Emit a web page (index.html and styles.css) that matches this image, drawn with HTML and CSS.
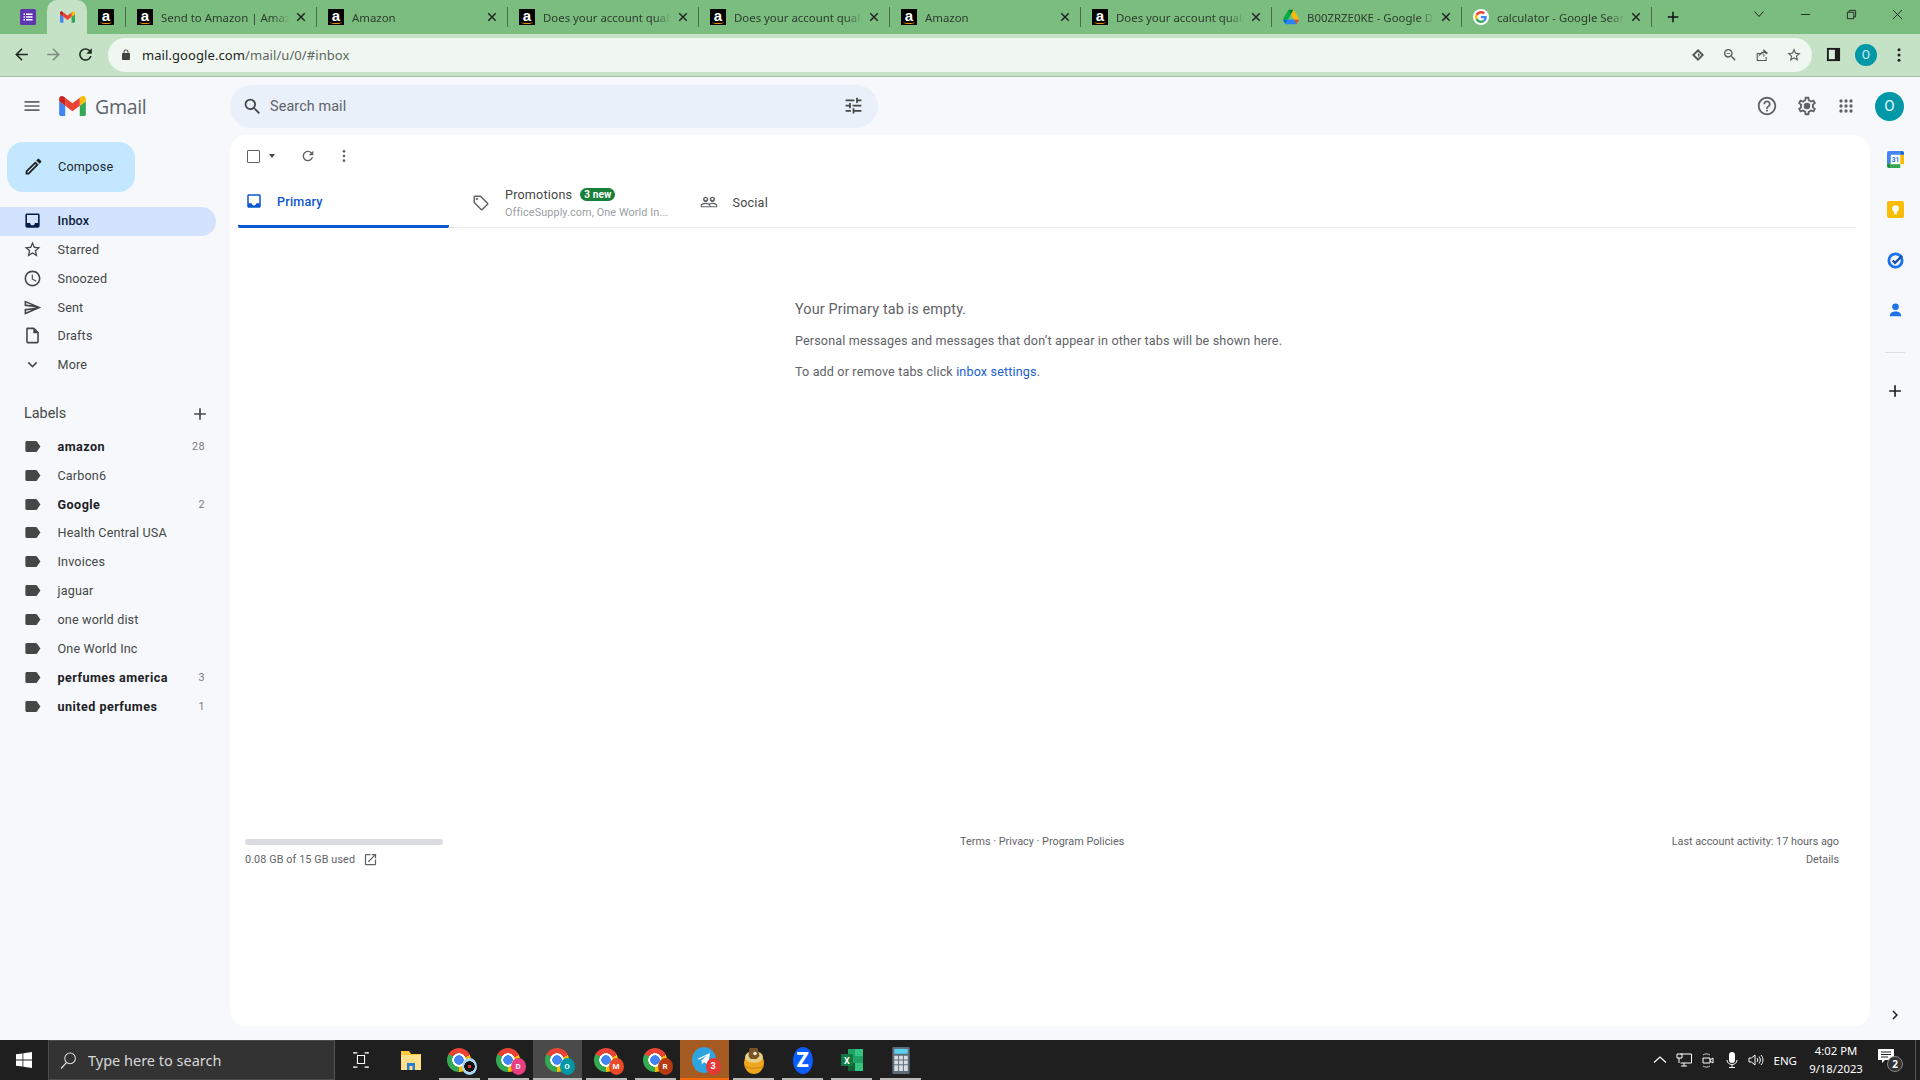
FILE: index.html
```html
<!DOCTYPE html>
<html lang="en">

<head>
  <meta charset="UTF-8" />
  <title>Inbox - Gmail</title>
  <link rel="stylesheet" href="styles.css">
</head>

<body>
  <svg class="sprite" xmlns="http://www.w3.org/2000/svg">
    <symbol id="i-menu" viewBox="0 0 24 24"><path d="M3 18h18v-2H3v2zm0-5h18v-2H3v2zm0-7v2h18V6H3z"/></symbol>
    <symbol id="i-search" viewBox="0 0 24 24"><path d="M15.5 14h-.79l-.28-.27A6.471 6.471 0 0 0 16 9.5 6.5 6.5 0 1 0 9.5 16c1.61 0 3.09-.59 4.23-1.57l.27.28v.79l5 4.99L20.49 19l-4.99-5zm-6 0C7.01 14 5 11.99 5 9.5S7.01 5 9.5 5 14 7.01 14 9.5 11.99 14 9.5 14z"/></symbol>
    <symbol id="i-tune" viewBox="0 0 24 24"><path d="M3 17v2h6v-2H3zM3 5v2h10V5H3zm10 16v-2h8v-2h-8v-2h-2v6h2zM7 9v2H3v2h4v2h2V9H7zm14 4v-2H11v2h10zm-6-4h2V7h4V5h-4V3h-2v6z"/></symbol>
    <symbol id="i-help" viewBox="0 0 24 24"><path d="M11 18h2v-2h-2v2zm1-16C6.48 2 2 6.48 2 12s4.48 10 10 10 10-4.48 10-10S17.52 2 12 2zm0 18c-4.41 0-8-3.59-8-8s3.59-8 8-8 8 3.59 8 8-3.59 8-8 8zm0-14c-2.21 0-4 1.79-4 4h2c0-1.1.9-2 2-2s2 .9 2 2c0 2-3 1.75-3 5h2c0-2.25 3-2.5 3-5 0-2.21-1.79-4-4-4z"/></symbol>
    <symbol id="i-gear" viewBox="0 0 24 24"><path d="M19.43 12.98c.04-.32.07-.64.07-.98 0-.34-.03-.66-.07-.98l2.11-1.65c.19-.15.24-.42.12-.64l-2-3.46c-.09-.16-.26-.25-.44-.25-.06 0-.12.01-.17.03l-2.49 1c-.52-.4-1.08-.73-1.69-.98l-.38-2.65C14.46 2.18 14.25 2 14 2h-4c-.25 0-.46.18-.49.42l-.38 2.65c-.61.25-1.17.59-1.69.98l-2.49-1c-.06-.02-.12-.03-.18-.03-.17 0-.34.09-.43.25l-2 3.46c-.13.22-.07.49.12.64l2.11 1.65c-.04.32-.07.65-.07.98 0 .33.03.66.07.98l-2.11 1.65c-.19.15-.24.42-.12.64l2 3.46c.09.16.26.25.44.25.06 0 .12-.01.17-.03l2.49-1c.52.4 1.08.73 1.69.98l.38 2.65c.03.24.24.42.49.42h4c.25 0 .46-.18.49-.42l.38-2.65c.61-.25 1.17-.59 1.69-.98l2.49 1c.06.02.12.03.18.03.17 0 .34-.09.43-.25l2-3.46c.12-.22.07-.49-.12-.64l-2.11-1.65zm-1.98-1.71c.04.31.05.52.05.73 0 .21-.02.43-.05.73l-.14 1.13.89.7 1.08.84-.7 1.21-1.27-.51-1.04-.42-.9.68c-.43.32-.84.56-1.25.73l-1.06.43-.16 1.13-.2 1.35h-1.4l-.19-1.35-.16-1.13-1.06-.43c-.43-.18-.83-.41-1.23-.71l-.91-.7-1.06.43-1.27.51-.7-1.21 1.08-.84.89-.7-.14-1.13c-.03-.31-.05-.54-.05-.74s.02-.43.05-.73l.14-1.13-.89-.7-1.08-.84.7-1.21 1.27.51 1.04.42.9-.68c.43-.32.84-.56 1.25-.73l1.06-.43.16-1.13.2-1.35h1.39l.19 1.35.16 1.13 1.06.43c.43.18.83.41 1.23.71l.91.7 1.06-.43 1.27-.51.7 1.21-1.07.85-.89.7.14 1.13z"/><circle cx="12" cy="12" r="3.6"/></symbol>
    <symbol id="i-apps" viewBox="0 0 24 24"><circle cx="6" cy="6" r="2"/><circle cx="12" cy="6" r="2"/><circle cx="18" cy="6" r="2"/><circle cx="6" cy="12" r="2"/><circle cx="12" cy="12" r="2"/><circle cx="18" cy="12" r="2"/><circle cx="6" cy="18" r="2"/><circle cx="12" cy="18" r="2"/><circle cx="18" cy="18" r="2"/></symbol>
    <symbol id="i-refresh" viewBox="0 0 24 24"><path d="M17.65 6.35A7.958 7.958 0 0 0 12 4c-4.42 0-7.99 3.58-7.99 8s3.57 8 7.99 8c3.73 0 6.84-2.55 7.73-6h-2.08A5.99 5.99 0 0 1 12 18c-3.31 0-6-2.69-6-6s2.69-6 6-6c1.66 0 3.14.69 4.22 1.78L13 11h7V4l-2.35 2.35z"/></symbol>
    <symbol id="i-dots" viewBox="0 0 24 24"><circle cx="12" cy="5" r="2"/><circle cx="12" cy="12" r="2"/><circle cx="12" cy="19" r="2"/></symbol>
    <symbol id="i-inbox" viewBox="0 0 24 24"><path d="M19 3H5c-1.1 0-2 .9-2 2v14c0 1.1.9 2 2 2h14c1.1 0 2-.9 2-2V5c0-1.1-.9-2-2-2zm0 12h-4c0 1.66-1.34 3-3 3s-3-1.34-3-3H5V5h14v10z"/></symbol>
    <symbol id="i-star" viewBox="0 0 24 24"><path d="M22 9.24l-7.19-.62L12 2 9.19 8.63 2 9.24l5.46 4.73L5.82 21 12 17.27 18.18 21l-1.63-7.03L22 9.24zM12 15.4l-3.76 2.27 1-4.28-3.32-2.88 4.38-.38L12 6.1l1.71 4.04 4.38.38-3.32 2.88 1 4.28L12 15.4z"/></symbol>
    <symbol id="i-clock" viewBox="0 0 24 24"><path d="M11.99 2C6.47 2 2 6.48 2 12s4.47 10 9.99 10C17.52 22 22 17.52 22 12S17.52 2 11.99 2zM12 20c-4.42 0-8-3.58-8-8s3.58-8 8-8 8 3.58 8 8-3.58 8-8 8zm.5-13H11v6l5.25 3.15.75-1.23-4.5-2.67z"/></symbol>
    <symbol id="i-send" viewBox="0 0 24 24"><path d="M4.01 6.03l7.51 3.22-7.52-1 .01-2.22m7.5 8.72L4 17.97v-2.22l7.51-1M2.01 3L2 10l15 2-15 2 .01 7L23 12 2.01 3z"/></symbol>
    <symbol id="i-draft" viewBox="0 0 24 24"><path d="M14 2H6c-1.1 0-1.99.9-1.99 2L4 20c0 1.1.89 2 1.99 2H18c1.1 0 2-.9 2-2V8l-6-6zM6 20V4h7v5h5v11H6z"/></symbol>
    <symbol id="i-more" viewBox="0 0 24 24"><path d="M16.59 8.59L12 13.17 7.41 8.59 6 10l6 6 6-6z"/></symbol>
    <symbol id="i-label" viewBox="0 0 24 24"><path d="M17.63 5.84C17.27 5.33 16.67 5 16 5L5 5.01C3.9 5.01 3 5.9 3 7v10c0 1.1.9 1.99 2 1.99L16 19c.67 0 1.27-.33 1.63-.84L22 12l-4.37-6.16z"/></symbol>
    <symbol id="i-add" viewBox="0 0 24 24"><path d="M19 13h-6v6h-2v-6H5v-2h6V5h2v6h6v2z"/></symbol>
    <symbol id="i-tag" viewBox="0 0 24 24"><path d="M21.41 11.58l-9-9C12.05 2.22 11.55 2 11 2H4c-1.1 0-2 .9-2 2v7c0 .55.22 1.05.59 1.42l9 9c.36.36.86.58 1.41.58.55 0 1.05-.22 1.41-.59l7-7c.37-.36.59-.86.59-1.41 0-.55-.23-1.06-.59-1.42zM13 20.01L4 11V4h7v-.01l9 9-7 7.02z"/><circle cx="6.5" cy="6.5" r="1.5"/></symbol>
    <symbol id="i-people" viewBox="0 0 24 24"><path d="M16.5 13c-1.2 0-3.07.34-4.5 1-1.43-.67-3.3-1-4.5-1C5.33 13 1 14.08 1 16.25V19h22v-2.75c0-2.17-4.33-3.25-6.5-3.25zm-4 4.5h-10v-1.25c0-.54 2.56-1.75 5-1.75s5 1.21 5 1.75v1.25zm9 0H14v-1.25c0-.46-.2-.86-.52-1.22.88-.3 1.96-.53 3.02-.53 2.44 0 5 1.21 5 1.75v1.25zM7.5 12c1.93 0 3.5-1.57 3.5-3.5S9.43 5 7.5 5 4 6.57 4 8.5 5.57 12 7.5 12zm0-5.5c.83 0 1.5.67 1.5 1.5s-.67 1.5-1.5 1.5S6 8.83 6 8 6.67 6.5 7.5 6.5zm9 5.5c1.93 0 3.5-1.57 3.5-3.5S18.43 5 16.5 5 13 6.57 13 8.5s1.57 3.5 3.5 3.5zm0-5.5c.83 0 1.5.67 1.5 1.5s-.67 1.5-1.5 1.5S15 8.83 15 8s.67-1.5 1.5-1.5z"/></symbol>
    <symbol id="i-pencil" viewBox="0 0 24 24"><path d="M3 17.25V21h3.75L17.81 9.94l-3.75-3.75L3 17.25zM5.92 19H5v-.92l9.06-9.06.92.92L5.92 19zM20.71 7.04a.996.996 0 0 0 0-1.41l-2.34-2.34a1 1 0 0 0-1.41 0l-1.83 1.83 3.75 3.75 1.83-1.83z"/></symbol>
    <symbol id="i-open" viewBox="0 0 24 24"><path d="M19 19H5V5h7V3H5a2 2 0 0 0-2 2v14a2 2 0 0 0 2 2h14c1.1 0 2-.9 2-2v-7h-2v7zM14 3v2h3.59l-9.83 9.83 1.41 1.41L19 6.41V10h2V3h-7z"/></symbol>
    <symbol id="i-back" viewBox="0 0 24 24"><path d="M20 11H7.83l5.59-5.59L12 4l-8 8 8 8 1.41-1.41L7.83 13H20v-2z"/></symbol>
    <symbol id="i-forward" viewBox="0 0 24 24"><path d="M12 4l-1.41 1.41L16.17 11H4v2h12.17l-5.58 5.59L12 20l8-8z"/></symbol>
    <symbol id="i-lock" viewBox="0 0 24 24"><path d="M18 8h-1V6c0-2.76-2.24-5-5-5S7 3.24 7 6v2H6c-1.1 0-2 .9-2 2v10c0 1.1.9 2 2 2h12c1.1 0 2-.9 2-2V10c0-1.1-.9-2-2-2zM9 6c0-1.66 1.34-3 3-3s3 1.34 3 3v2H9V6z"/></symbol>
    <symbol id="i-zoomout" viewBox="0 0 24 24"><path d="M15.5 14h-.79l-.28-.27A6.471 6.471 0 0 0 16 9.5 6.5 6.5 0 1 0 9.5 16c1.61 0 3.09-.59 4.23-1.57l.27.28v.79l5 4.99L20.49 19l-4.99-5zm-6 0C7.01 14 5 11.99 5 9.5S7.01 5 9.5 5 14 7.01 14 9.5 11.99 14 9.5 14zM7 9h5v1H7z"/></symbol>
    <symbol id="i-share" viewBox="0 0 24 24"><path d="M4 9h5v1.6H5.6v9h11.8V15H19v6H4V9z"/><path d="M14 3l7 6-7 6v-3.6c-3.4 0-5.6 1-7.4 3.6.5-4.200 2.900-7.200 7.400-8.300V3zm1.600 3.500v2.600c-3 .3-4.800 1.300-6 3 1.500-.8 3.300-1.200 6-1.200v2.600l3-2.500-3-2.500z" fill-rule="evenodd"/></symbol>
    <symbol id="i-close" viewBox="0 0 12 12"><path d="M1.500 1.500l9 9M10.500 1.500l-9 9" stroke="currentColor" stroke-width="1.700" fill="none"/></symbol>
    <symbol id="i-gmail" viewBox="52 42 88 66">
      <path fill="#4285f4" d="M58 108h14V74L52 59v43c0 3.320 2.690 6 6 6"/>
      <path fill="#34a853" d="M120 108h14c3.320 0 6-2.690 6-6V59l-20 15"/>
      <path fill="#fbbc04" d="M120 48v26l20-15v-8c0-7.420-8.470-11.650-14.400-7.200"/>
      <path fill="#ea4335" d="M72 74V48l24 18 24-18v26L96 92"/>
      <path fill="#c5221f" d="M52 51v8l20 15V48l-5.600-4.200c-5.940-4.450-14.400-.220-14.400 7.200"/>
    </symbol>
    <symbol id="i-google" viewBox="0 0 48 48">
      <path fill="#EA4335" d="M24 9.500c3.540 0 6.710 1.220 9.210 3.600l6.850-6.850C35.900 2.380 30.470 0 24 0 14.620 0 6.510 5.380 2.560 13.220l7.980 6.190C12.430 13.720 17.740 9.500 24 9.500z"/>
      <path fill="#4285F4" d="M46.980 24.550c0-1.570-.150-3.090-.380-4.550H24v9.020h12.940c-.580 2.960-2.260 5.480-4.780 7.180l7.730 6c4.510-4.180 7.090-10.360 7.090-17.650z"/>
      <path fill="#FBBC05" d="M10.530 28.590c-.480-1.450-.760-2.990-.760-4.590s.270-3.140.760-4.590l-7.980-6.190C.920 16.460 0 20.120 0 24c0 3.880.920 7.540 2.560 10.780l7.970-6.190z"/>
      <path fill="#34A853" d="M24 48c6.480 0 11.930-2.130 15.890-5.810l-7.730-6c-2.150 1.450-4.920 2.300-8.160 2.300-6.260 0-11.570-4.220-13.470-9.910l-7.980 6.190C6.510 42.620 14.620 48 24 48z"/>
    </symbol>
    <symbol id="i-drive" viewBox="0 0 87.300 78">
      <path d="m6.600 66.850 3.850 6.650c.8 1.400 1.950 2.500 3.300 3.300l13.750-23.800h-27.500c0 1.550.4 3.100 1.200 4.500z" fill="#0066da"/>
      <path d="m43.650 25-13.750-23.800c-1.350.8-2.500 1.900-3.300 3.300l-25.400 44a9.060 9.060 0 0 0 -1.200 4.500h27.500z" fill="#00ac47"/>
      <path d="m73.550 76.800c1.350-.8 2.500-1.900 3.300-3.300l1.600-2.750 7.650-13.250c.8-1.400 1.200-2.950 1.200-4.500h-27.502l5.852 11.500z" fill="#ea4335"/>
      <path d="m43.650 25 13.750-23.800c-1.350-.8-2.900-1.200-4.500-1.200h-18.500c-1.600 0-3.150.45-4.500 1.200z" fill="#00832d"/>
      <path d="m59.800 53h-32.300l-13.750 23.800c1.350.8 2.900 1.200 4.500 1.200h50.800c1.600 0 3.150-.45 4.500-1.200z" fill="#2684fc"/>
      <path d="m73.400 26.500-12.700-22c-.8-1.400-1.950-2.500-3.300-3.300l-13.750 23.800 16.150 28h27.450c0-1.550-.4-3.100-1.200-4.500z" fill="#ffba00"/>
    </symbol>
  </svg>

  <!-- browser chrome -->
  <div class="tabstrip">
    <div class="pin">
      <svg class="fav" viewBox="0 0 16 16"><rect width="16" height="16" rx="1.500" fill="#5f35b0"/><path d="M3.500 4.500h1.500V6H3.500zM6 4.500h6.500V6H6zM3.500 7.300h1.500v1.500H3.500zM6 7.300h6.500v1.500H6zM3.500 10h1.500v1.500H3.500zM6 10h6.500v1.500H6z" fill="#fff"/></svg>
    </div>
    <div class="pin pin-active"><svg class="fav-m"><use href="#i-gmail"/></svg></div>
    <div class="pin pin-sep"><span class="amz">a</span></div>
    <div class="tab"><span class="amz">a</span><span class="tab-title">Send to Amazon | Amaz</span><svg class="tab-x"><use href="#i-close"/></svg></div>
    <div class="tab"><span class="amz">a</span><span class="tab-title">Amazon</span><svg class="tab-x"><use href="#i-close"/></svg></div>
    <div class="tab"><span class="amz">a</span><span class="tab-title">Does your account quali</span><svg class="tab-x"><use href="#i-close"/></svg></div>
    <div class="tab"><span class="amz">a</span><span class="tab-title">Does your account quali</span><svg class="tab-x"><use href="#i-close"/></svg></div>
    <div class="tab"><span class="amz">a</span><span class="tab-title">Amazon</span><svg class="tab-x"><use href="#i-close"/></svg></div>
    <div class="tab"><span class="amz">a</span><span class="tab-title">Does your account quali</span><svg class="tab-x"><use href="#i-close"/></svg></div>
    <div class="tab tab-narrow"><svg class="fav"><use href="#i-drive"/></svg><span class="tab-title">B00ZRZE0KE - Google D</span><svg class="tab-x"><use href="#i-close"/></svg></div>
    <div class="tab tab-narrow"><span class="g-fav"><svg><use href="#i-google"/></svg></span><span class="tab-title">calculator - Google Sear</span><svg class="tab-x"><use href="#i-close"/></svg></div>
    <svg class="newtab"><use href="#i-add"/></svg>
    <div class="win-controls">
      <svg class="win-chev" viewBox="0 0 12 12"><path d="M1.500 3.500L6 8.500l4.500-5" fill="none" stroke="#222" stroke-width="1"/></svg>
      <div class="win-btn"><svg viewBox="0 0 12 12"><path d="M1 6h10" stroke="#222" stroke-width="1"/></svg></div>
      <div class="win-btn"><svg viewBox="0 0 12 12"><path d="M1.500 3.500h7v7h-7zM3.500 3.500v-2h7v7h-2" fill="none" stroke="#222" stroke-width="1"/></svg></div>
      <div class="win-btn"><svg viewBox="0 0 12 12"><path d="M1 1l10 10M11 1L1 11" stroke="#222" stroke-width="1"/></svg></div>
    </div>
  </div>

  <div class="toolbar">
    <svg class="nav-btn"><use href="#i-back"/></svg>
    <svg class="nav-btn nav-off"><use href="#i-forward"/></svg>
    <svg class="nav-btn"><use href="#i-refresh"/></svg>
    <div class="omnibox">
      <svg class="omni-lock"><use href="#i-lock"/></svg>
      <span class="omni-url"><b>mail.google.com</b>/mail/u/0/#inbox</span>
      <div class="omni-actions">
        <svg viewBox="0 0 24 24"><path d="M12 3l9 9-9 9-9-9z"/><path d="M12 7l5 5-5 5-5-5z" fill="#eff7f0"/><path d="M12 9l3 3-3 3z"/></svg>
        <svg><use href="#i-zoomout"/></svg>
        <svg><use href="#i-share"/></svg>
        <svg><use href="#i-star"/></svg>
      </div>
    </div>
    <svg class="side-toggle" viewBox="0 0 16 16"><path d="M1 1h14v14H1z" fill="#1c1c1c"/><path d="M3 3h6.500v10H3z" fill="#d9ecda"/></svg>
    <span class="profile-chip">O</span>
    <svg class="chrome-dots"><use href="#i-dots"/></svg>
  </div>

  <!-- gmail -->
  <div class="gmail">
    <header class="gm-header">
      <div class="gm-brand">
        <svg class="gm-menu"><use href="#i-menu"/></svg>
        <svg class="gm-logo"><use href="#i-gmail"/></svg>
        <span class="gm-word">Gmail</span>
      </div>
      <div class="searchbar">
        <svg><use href="#i-search"/></svg>
        <span class="search-text">Search mail</span>
        <svg class="search-tune"><use href="#i-tune"/></svg>
      </div>
      <div class="gm-actions">
        <svg class="a-help"><use href="#i-help"/></svg>
        <svg class="a-gear"><use href="#i-gear"/></svg>
        <svg class="a-apps"><use href="#i-apps"/></svg>
        <span class="gm-avatar">O</span>
      </div>
    </header>

    <div class="gm-body">
      <nav class="sidebar">
        <div class="compose"><svg><use href="#i-pencil"/></svg><span>Compose</span></div>
        <ul class="nav-list">
          <li class="nav-item active"><svg><use href="#i-inbox"/></svg><span>Inbox</span></li>
          <li class="nav-item"><svg><use href="#i-star"/></svg><span>Starred</span></li>
          <li class="nav-item"><svg><use href="#i-clock"/></svg><span>Snoozed</span></li>
          <li class="nav-item"><svg><use href="#i-send"/></svg><span>Sent</span></li>
          <li class="nav-item"><svg><use href="#i-draft"/></svg><span>Drafts</span></li>
          <li class="nav-item"><svg><use href="#i-more"/></svg><span>More</span></li>
        </ul>
        <div class="labels-head"><span>Labels</span><svg><use href="#i-add"/></svg></div>
        <ul class="nav-list label-list">
          <li class="nav-item unread"><svg><use href="#i-label"/></svg><span>amazon</span><em>28</em></li>
          <li class="nav-item"><svg><use href="#i-label"/></svg><span>Carbon6</span></li>
          <li class="nav-item unread"><svg><use href="#i-label"/></svg><span>Google</span><em>2</em></li>
          <li class="nav-item"><svg><use href="#i-label"/></svg><span>Health Central USA</span></li>
          <li class="nav-item"><svg><use href="#i-label"/></svg><span>Invoices</span></li>
          <li class="nav-item"><svg><use href="#i-label"/></svg><span>jaguar</span></li>
          <li class="nav-item"><svg><use href="#i-label"/></svg><span>one world dist</span></li>
          <li class="nav-item"><svg><use href="#i-label"/></svg><span>One World Inc</span></li>
          <li class="nav-item unread"><svg><use href="#i-label"/></svg><span>perfumes america</span><em>3</em></li>
          <li class="nav-item unread"><svg><use href="#i-label"/></svg><span>united perfumes</span><em>1</em></li>
        </ul>
      </nav>

      <main class="card">
        <div class="mail-tools">
          <span class="check-box"></span>
          <span class="check-caret"></span>
          <svg class="tool-refresh"><use href="#i-refresh"/></svg>
          <svg class="tool-dots"><use href="#i-dots"/></svg>
        </div>
        <div class="mail-tabs">
          <div class="mail-tab mail-tab-on"><svg><use href="#i-inbox"/></svg><span>Primary</span></div>
          <div class="mail-tab mail-tab-promo">
            <svg><use href="#i-tag"/></svg>
            <div>
              <div class="promo-line"><span>Promotions</span><span class="new-badge">3 new</span></div>
              <div class="promo-snippet">OfficeSupply.com, One World In...</div>
            </div>
          </div>
          <div class="mail-tab mail-tab-social"><svg><use href="#i-people"/></svg><span>Social</span></div>
        </div>
        <div class="empty">
          <h2>Your Primary tab is empty.</h2>
          <p>Personal messages and messages that don&rsquo;t appear in other tabs will be shown here.</p>
          <p>To add or remove tabs click <a>inbox settings</a>.</p>
        </div>
        <footer class="mail-foot">
          <div>
            <div class="storage-bar"></div>
            <div class="storage-text"><span>0.08 GB of 15 GB used</span><svg><use href="#i-open"/></svg></div>
          </div>
          <div class="foot-links">Terms &middot; Privacy &middot; Program Policies</div>
          <div class="foot-activity">
            <div>Last account activity: 17 hours ago</div>
            <div class="foot-details">Details</div>
          </div>
        </footer>
      </main>

      <aside class="rail">
        <svg class="rail-app" viewBox="0 0 18 18"><path d="M1 1h12v16H1z" fill="#fff"/><path d="M0 13h4v5H2a2 2 0 0 1-2-2z" fill="#1e8e3e"/><path d="M4 14h10v4H4z" fill="#34a853"/><path d="M14 4h4v10h-4z" fill="#fbbc04"/><path d="M2 0h12v4H4v9H0V2a2 2 0 0 1 2-2z" fill="#4285f4"/><path d="M14 0h2a2 2 0 0 1 2 2v2h-4z" fill="#1967d2"/><text x="5" y="12" class="cal-num">31</text></svg>
        <svg class="rail-app" viewBox="0 0 18 18"><rect width="18" height="18" rx="2" fill="#fbbc04"/><circle cx="9" cy="8" r="3.600" fill="#fff"/><path d="M7.500 11.500h3V14h-3z" fill="#fff"/></svg>
        <svg class="rail-app" viewBox="0 0 18 18"><circle cx="9" cy="9" r="7" fill="none" stroke="#1a73e8" stroke-width="3"/><path d="M6 9l2.500 2.500L16 4" fill="none" stroke="#174ea6" stroke-width="2.400"/></svg>
        <svg class="rail-app" viewBox="0 0 18 18"><circle cx="9" cy="5" r="3.500" fill="#1a73e8"/><path d="M3 15c0-3.500 3-5 6-5s6 1.500 6 5z" fill="#1a73e8"/></svg>
        <div class="rail-line"></div>
        <svg class="rail-add"><use href="#i-add"/></svg>
        <svg class="rail-chev" viewBox="0 0 24 24"><path d="M8.590 16.590L13.170 12 8.590 7.410 10 6l6 6-6 6z"/></svg>
      </aside>
    </div>
  </div>

  <!-- windows taskbar -->
  <div class="taskbar">
    <div class="start"><svg viewBox="0 0 16 16"><path d="M0 2.300l6.500-.9v6.200H0zM7.300 1.300L16 0v7.600H7.300zM0 8.400h6.500v6.200L0 13.700zM7.300 8.400H16V16l-8.700-1.300z" fill="#fff"/></svg></div>
    <div class="task-search">
      <svg viewBox="0 0 16 16"><circle cx="9.500" cy="6" r="5" fill="none" stroke="#ddd" stroke-width="1"/><path d="M6 10l-5 5.500" stroke="#ddd" stroke-width="1.200"/></svg>
      <span>Type here to search</span>
    </div>
    <div class="task-view"><svg viewBox="0 0 18 18"><path d="M5 4h8v9H5zM1 2V0M1 16v2M17 2V0M17 16v2M1 1h4M1 17h4M13 1h4M13 17h4" fill="none" stroke="#fff" stroke-width="1.200"/></svg></div>
    <div class="task-app">
      <svg viewBox="0 0 24 24"><path d="M2 3h8l2 3h10v16H2z" fill="#ffc83d"/><path d="M2 7h20v15H2z" fill="#ffe08a"/><path d="M8 15h8v7H8z" fill="#2b7cd3"/><path d="M10.500 18h3v4h-3z" fill="#ffe08a"/></svg>
    </div>
    <div class="task-app run"><span class="chrome-ic"><i class="bdg bdg-dark"></i></span></div>
    <div class="task-app run"><span class="chrome-ic"><i class="bdg bdg-pink">D</i></span></div>
    <div class="task-app run on"><span class="chrome-ic"><i class="bdg bdg-teal">O</i></span></div>
    <div class="task-app run"><span class="chrome-ic"><i class="bdg bdg-red">M</i></span></div>
    <div class="task-app run"><span class="chrome-ic"><i class="bdg bdg-brick">R</i></span></div>
    <div class="task-app run alert">
      <span class="tg-ic"><svg viewBox="0 0 24 24"><path d="M5 12l13-6-2 12-4-3-2 2.500-.5-4 5-5-7 4z" fill="#fff"/></svg><i class="bdg bdg-alert">3</i></span>
    </div>
    <div class="task-app run"><svg class="bird-ic" viewBox="0 0 21 27"><ellipse cx="10.500" cy="16" rx="10" ry="11" fill="#efa51c"/><ellipse cx="10.500" cy="10" rx="9" ry="6" fill="#e7cf8a"/><path d="M6 1h8l2 8-3 3H7L5 9z" fill="#7a5428"/><circle cx="11.500" cy="6.500" r="1.800" fill="#f5f0e0"/><path d="M1 19c5 3 14 3 19 0" fill="none" stroke="#c9820c" stroke-width="1"/></svg></div>
    <div class="task-app run"><span class="zoom-ic">Z</span></div>
    <div class="task-app run"><svg viewBox="0 0 24 24"><path d="M8 1h15v22H8z" fill="#21a366"/><path d="M15 1h8v7h-8zM15 15h8v8h-8z" fill="#33c481"/><path d="M8 15h7v8H8z" fill="#185c37"/><path d="M1 6h12v12H1z" fill="#107c41"/><text x="4" y="15.500" class="xl-x">X</text></svg></div>
    <div class="task-app run"><svg viewBox="0 0 24 28" class="calc-ic"><rect x="3" width="18" height="28" rx="1" fill="#5e6c78"/><path d="M5 2h14v5H5z" fill="#5bd0f0"/><path d="M5 9h4v4H5zM10 9h4v4h-4zM15 9h4v4h-4zM5 14h4v4H5zM10 14h4v4h-4zM15 14h4v4h-4zM5 19h4v6H5zM10 19h4v6h-4zM15 19h4v6h-4z" fill="#d8dde2"/></svg></div>

    <div class="tray">
      <svg class="tray-ic" viewBox="0 0 16 16"><path d="M2 10.500L8 5l6 5.500" fill="none" stroke="#fff" stroke-width="1.200"/></svg>
      <svg class="tray-ic" viewBox="0 0 16 16"><path d="M4.500 2h11v9h-11M1 2h5v4H1zM3 6v5M8 11v3M5 14h6" fill="none" stroke="#fff" stroke-width="1"/></svg>
      <svg class="tray-ic" viewBox="0 0 16 16"><path d="M3 6h7v5H3zM10 8l3-2v5l-3-2" fill="none" stroke="#fff" stroke-width="1"/><path d="M3 3c2-1.500 5-1.500 7 0M3 14c2 1.500 5 1.500 7 0" fill="none" stroke="#ccc" stroke-width="1"/></svg>
      <svg class="tray-ic" viewBox="0 0 16 16"><rect x="5" y="0" width="6" height="11" rx="3" fill="#fff"/><path d="M3 8c0 6 10 6 10 0M8 13v2.500M5 15.500h6" fill="none" stroke="#fff" stroke-width="1"/></svg>
      <svg class="tray-ic" viewBox="0 0 16 16"><path d="M1 6h2.500L7 3v10l-3.500-3H1z" fill="none" stroke="#fff" stroke-width="1"/><path d="M9 6c1 1 1 3 0 4M11 4.500c1.800 2 1.800 5 0 7M13 3c2.600 3 2.600 7 0 10" fill="none" stroke="#fff" stroke-width="1"/></svg>
      <span class="tray-lang">ENG</span>
      <div class="tray-clock"><div>4:02 PM</div><div>9/18/2023</div></div>
      <div class="tray-note">
        <svg viewBox="0 0 16 16"><path d="M0 1h16v11H7l-3 3v-3H0z" fill="#fff"/><path d="M3 4h10M3 6.500h10M3 9h7" stroke="#1f1f1f" stroke-width="1"/></svg>
        <span class="note-count">2</span>
      </div>
      <div class="show-desk"></div>
    </div>
  </div>
</body>
</html>
```

FILE: styles.css
```css
* {
  box-sizing: border-box;
  margin: 0;
  padding: 0;
}

html,
body {
  height: 1080px;
  overflow: hidden;
}

body {
  display: flex;
  flex-direction: column;
  font-family: Roboto, sans-serif;
  background-color: #f6f8fc;
}

.sprite {
  display: none;
}

ul {
  list-style: none;
}

/* tab strip */
.tabstrip {
  display: flex;
  align-items: center;
  height: 34px;
  padding-left: 8px;
  background-color: #7abd7e;
  flex-shrink: 0;
}

.pin {
  display: flex;
  align-items: center;
  justify-content: center;
  width: 39px;
  height: 34px;
}

.pin-active {
  width: 40px;
  background-color: #c5e1c6;
  border-radius: 10px 10px 0 0;
}

.pin-sep {
  width: 39px;
  height: 20px;
  border-right: 1px solid #46704a;
}

.fav {
  width: 16px;
  height: 16px;
  flex-shrink: 0;
}

.fav-m {
  width: 15px;
  height: 12px;
}

.amz {
  position: relative;
  display: block;
  width: 16px;
  height: 16px;
  flex-shrink: 0;
  background-color: #000;
  color: #fff;
  font: bold 15px/13px "Liberation Sans", sans-serif;
  text-align: center;
}

.amz::after {
  content: "";
  position: absolute;
  left: 2px;
  right: 2px;
  bottom: 1px;
  height: 3px;
  border-bottom: 1px solid #f08c00;
  border-radius: 0 0 50% 50%;
}

.g-fav {
  display: flex;
  align-items: center;
  justify-content: center;
  width: 16px;
  height: 16px;
  flex-shrink: 0;
  background-color: #fff;
  border-radius: 50%;
}

.g-fav svg {
  width: 12px;
  height: 12px;
}

.tab {
  display: flex;
  align-items: center;
  width: 191px;
  height: 20px;
  padding-left: 11px;
  padding-right: 10px;
  border-right: 1px solid #46704a;
  flex-shrink: 0;
}

.tab-narrow {
  width: 190px;
}

.tab-title {
  flex: 1;
  margin-left: 8px;
  overflow: hidden;
  white-space: nowrap;
  color: #2f3b30;
  font: 11.4px "Noto Sans", sans-serif;
  -webkit-mask-image: linear-gradient(to right, #000 85%, transparent 98%);
  mask-image: linear-gradient(to right, #000 85%, transparent 98%);
}

.tab-x {
  width: 10px;
  height: 10px;
  margin-left: 4px;
  color: #222;
  flex-shrink: 0;
}

.newtab {
  width: 18px;
  height: 18px;
  margin-left: 12px;
  fill: #111;
}

.win-controls {
  display: flex;
  align-items: center;
  margin-left: auto;
  align-self: flex-start;
  height: 28px;
}

.win-chev {
  width: 12px;
  height: 12px;
  margin-right: 17px;
}

.win-btn {
  display: flex;
  align-items: center;
  justify-content: center;
  width: 46px;
  height: 28px;
}

.win-btn svg {
  width: 11px;
  height: 11px;
}

/* address bar row */
.toolbar {
  display: flex;
  align-items: center;
  height: 43px;
  padding: 0 0 1px 12px;
  background-color: #c5e1c6;
  border-bottom: 1px solid #a5bfa7;
  flex-shrink: 0;
}

.nav-btn {
  width: 19px;
  height: 19px;
  margin-right: 13px;
  fill: #202a21;
  flex-shrink: 0;
}

.nav-off {
  fill: #7d8f7e;
}

.omnibox {
  display: flex;
  align-items: center;
  width: 1704px;
  height: 34px;
  padding: 0 10px 0 12px;
  background-color: #eff7f0;
  border-radius: 17px;
}

.omni-lock {
  width: 12px;
  height: 12px;
  fill: #444;
}

.omni-url {
  margin-left: 10px;
  color: #5d665e;
  font: 13px "Noto Sans", sans-serif;
  letter-spacing: 0.08px;
}

.omni-url b {
  color: #1d241e;
  font-weight: 400;
}

.omni-actions {
  display: flex;
  gap: 16px;
  margin-left: auto;
}

.omni-actions svg {
  width: 16px;
  height: 16px;
  fill: #4f5a50;
}

.side-toggle {
  width: 15px;
  height: 15px;
  margin-left: 14px;
}

.profile-chip {
  width: 22px;
  height: 22px;
  margin-left: 14px;
  background-color: #0097a7;
  border-radius: 50%;
  color: #d6f1f4;
  font-size: 12px;
  line-height: 22px;
  text-align: center;
}

.chrome-dots {
  width: 18px;
  height: 18px;
  margin-left: 13px;
  fill: #222;
}

/* gmail */
.gmail {
  display: flex;
  flex-direction: column;
  flex: 1;
  min-height: 0;
}

.gm-header {
  display: flex;
  align-items: center;
  height: 58px;
  flex-shrink: 0;
}

.gm-brand {
  display: flex;
  align-items: center;
  width: 230px;
  padding-left: 22px;
}

.gm-menu {
  width: 20px;
  height: 20px;
  fill: #5f6368;
}

.gm-logo {
  width: 27px;
  height: 20px;
  margin-left: 17px;
}

.gm-word {
  margin-left: 9px;
  color: #5f6368;
  font: 19.5px "Open Sans", sans-serif;
  letter-spacing: -0.3px;
}

.searchbar {
  display: flex;
  align-items: center;
  width: 648px;
  height: 43px;
  padding: 0 14px 0 12px;
  background-color: #e9f0fa;
  border-radius: 22px;
}

.searchbar svg {
  width: 21px;
  height: 21px;
  fill: #444746;
  flex-shrink: 0;
}

.searchbar .search-tune {
  margin-bottom: 2px;
}

.search-text {
  flex: 1;
  margin-left: 7px;
  color: #5f6368;
  font-size: 14.4px;
  letter-spacing: 0.1px;
}

.gm-actions {
  display: flex;
  align-items: center;
  margin-left: auto;
  padding-right: 16px;
}

.gm-actions svg {
  width: 22px;
  height: 22px;
  fill: #5f6368;
}

.a-gear {
  margin-left: 18px;
}

.a-apps {
  margin-left: 18px;
  width: 20px !important;
}

.gm-avatar {
  width: 29px;
  height: 29px;
  margin-left: 19px;
  background-color: #0097a7;
  border-radius: 50%;
  color: #e8f7f9;
  font-size: 15px;
  line-height: 29px;
  text-align: center;
}

.gm-body {
  display: flex;
  flex: 1;
  min-height: 0;
}

/* sidebar */
.sidebar {
  width: 230px;
  flex-shrink: 0;
  padding-top: 7px;
}

.compose {
  display: flex;
  align-items: center;
  width: 128px;
  height: 50px;
  margin: 0 0 15px 7px;
  padding: 0 0 2px 16px;
  background-color: #c2e7ff;
  border-radius: 16px;
  color: #1f2a33;
  font-size: 12.6px;
  letter-spacing: 0.2px;
}

.compose svg {
  width: 21px;
  height: 21px;
  margin-right: 14px;
  fill: #1f1f1f;
}

.nav-item {
  display: flex;
  align-items: center;
  width: 216px;
  height: 28.8px;
  padding: 0 11px 1.5px 22.5px;
  border-radius: 0 15px 15px 0;
  color: #444746;
  font-size: 12.6px;
  letter-spacing: 0.15px;
}

.label-list .nav-item {
  height: 28.9px;
  padding-bottom: 2px;
}

.nav-item svg {
  width: 19px;
  height: 19px;
  margin-right: 16px;
  fill: #444746;
  flex-shrink: 0;
}

.nav-item span {
  flex: 1;
}

.nav-item em {
  color: #777b7f;
  font-size: 10.8px;
  font-style: normal;
  font-weight: 400;
}

.nav-item.active {
  background-color: #d3e3fd;
  color: #0b1f3a;
  font-weight: 500;
}

.nav-item.active svg {
  fill: #041e49;
}

.nav-item.unread {
  color: #202124;
  font-weight: 700;
  letter-spacing: 0.45px;
}

.labels-head {
  display: flex;
  align-items: center;
  justify-content: space-between;
  width: 216px;
  height: 20px;
  margin: 24px 0 9px;
  padding: 0 6px 0 24px;
  color: #444746;
  font-size: 14.4px;
}

.labels-head svg {
  width: 20px;
  height: 20px;
  fill: #444746;
}

/* main card */
.card {
  display: flex;
  flex-direction: column;
  width: 1640px;
  height: 891px;
  background-color: #fff;
  border-radius: 16px;
  flex-shrink: 0;
}

.mail-tools {
  display: flex;
  align-items: center;
  height: 42px;
  padding-left: 17px;
}

.check-box {
  width: 13px;
  height: 13px;
  border: 1.500px solid #5f6368;
  border-radius: 1px;
}

.check-caret {
  width: 0;
  height: 0;
  margin-left: 9px;
  border-left: 3.500px solid transparent;
  border-right: 3.500px solid transparent;
  border-top: 4px solid #444746;
}

.tool-refresh {
  width: 16px;
  height: 16px;
  margin-left: 25px;
  fill: #5f6368;
}

.tool-dots {
  width: 16px;
  height: 16px;
  margin-left: 20px;
  fill: #5f6368;
}

.mail-tabs {
  display: flex;
  height: 51px;
  margin: 0 14px 0 8px;
  border-bottom: 1px solid #e8eaed;
  color: #444746;
  font-size: 12.6px;
  letter-spacing: 0.2px;
}

.mail-tab {
  display: flex;
  align-items: center;
  height: 51px;
}

.mail-tab svg {
  width: 18px;
  height: 18px;
  fill: #5f6368;
  flex-shrink: 0;
}

.mail-tab-on {
  width: 211px;
  padding-left: 7px;
  border-bottom: 3px solid #0b57d0;
  border-radius: 0 0 2px 2px;
  color: #0b57d0;
  font-weight: 500;
}

.mail-tab-on svg {
  fill: #0b57d0;
  margin-right: 14px;
}

.mail-tab-promo {
  width: 231px;
  padding-left: 23px;
}

.mail-tab-promo svg {
  margin-right: 15px;
}

.promo-line {
  display: flex;
  align-items: center;
  gap: 8px;
}

.new-badge {
  padding: 0 4px;
  background-color: #188038;
  border-radius: 7px;
  color: #fff;
  font-size: 10px;
  font-weight: 700;
  letter-spacing: 0.1px;
  line-height: 13px;
}

.promo-snippet {
  margin-top: 4px;
  color: #9aa0a6;
  font-size: 10.8px;
  letter-spacing: 0.12px;
}

.mail-tab-social {
  padding: 0 0 1px 20px;
}

.mail-tab-social svg {
  margin-right: 14.5px;
}

.empty {
  height: 604px;
  padding: 73px 0 0 565px;
  color: #5f6368;
  letter-spacing: 0.14px;
}

.empty h2 {
  font-size: 14.4px;
  font-weight: 400;
  line-height: 18px;
}

.empty p {
  font-size: 12.6px;
  line-height: 16px;
  margin-top: 14px;
}

.empty p + p {
  margin-top: 15px;
}

.empty a {
  color: #1a5fd0;
}

.mail-foot {
  display: grid;
  grid-template-columns: 715px auto 1fr;
  padding: 7px 31px 0 15px;
  color: #5f6368;
  font-size: 10.8px;
}

.storage-bar {
  width: 198px;
  height: 6px;
  background-color: #dadce0;
  border-radius: 3px;
}

.storage-text {
  display: flex;
  align-items: center;
  margin-top: 7px;
  letter-spacing: 0.1px;
}

.storage-text svg {
  width: 15px;
  height: 15px;
  margin-left: 8px;
  fill: #5f6368;
}

.foot-links {
  margin-top: -3px;
  line-height: 12px;
  letter-spacing: 0.03px;
}

.foot-activity {
  margin-top: -3px;
  text-align: right;
  line-height: 12px;
}

.foot-details {
  margin-top: 6px;
}

/* right rail */
.rail {
  display: flex;
  flex-direction: column;
  align-items: center;
  flex: 1;
  padding-top: 16px;
}

.rail-app {
  width: 17px;
  height: 17px;
  margin-bottom: 33.4px;
}

.cal-num {
  fill: #1a73e8;
  font: bold 7px Roboto, sans-serif;
}

.rail-line {
  width: 20px;
  height: 1px;
  margin-top: -0.5px;
  background-color: #dadce0;
}

.rail-add {
  width: 20px;
  height: 20px;
  margin-top: 28px;
  fill: #202124;
}

.rail-chev {
  width: 18px;
  height: 18px;
  margin-top: auto;
  margin-bottom: 16px;
  fill: #202124;
}

/* taskbar */
.taskbar {
  display: flex;
  align-items: center;
  height: 40px;
  background-color: #1f1f1f;
  flex-shrink: 0;
}

.start {
  display: flex;
  align-items: center;
  justify-content: center;
  width: 48px;
  height: 40px;
}

.start svg {
  width: 16px;
  height: 16px;
}

.task-search {
  display: flex;
  align-items: center;
  width: 287px;
  height: 40px;
  padding-left: 11px;
  background-color: #333;
  border: 1px solid #4d4d4d;
  border-right-color: #555;
  color: #d8d8d8;
  font: 14.5px "Noto Sans", sans-serif;
}

.task-search svg {
  width: 17px;
  height: 17px;
  margin-right: 11px;
}

.task-view {
  display: flex;
  align-items: center;
  justify-content: center;
  width: 51px;
  height: 40px;
}

.task-view svg {
  width: 16px;
  height: 16px;
}

.task-app {
  position: relative;
  display: flex;
  align-items: center;
  justify-content: center;
  width: 49px;
  height: 40px;
}

.task-app > svg {
  width: 24px;
  height: 24px;
}

.task-app > svg.calc-ic,
.task-app > svg.bird-ic {
  height: 27px;
}

.task-app.run::after {
  content: "";
  position: absolute;
  left: 4px;
  right: 4px;
  bottom: 0;
  height: 2px;
  background-color: #b9b9b9;
}

.task-app.on {
  background-color: #4a4a4a;
}

.task-app.on::after {
  left: 0;
  right: 0;
}

.task-app.alert {
  background-color: #a65b22;
}

.task-app.alert::after {
  left: 0;
  right: 0;
  background-color: #ff6a00;
}

.chrome-ic {
  position: relative;
  display: block;
  width: 24px;
  height: 24px;
  margin-right: 2px;
  border-radius: 50%;
  background: radial-gradient(circle, #4285f4 0 4.500px, #fff 5px 6.500px, transparent 7px),
    conic-gradient(from -60deg, #ea4335 0 125deg, #fbbc04 125deg 240deg, #34a853 240deg);
}

.bdg {
  position: absolute;
  right: -6px;
  bottom: -3px;
  width: 15px;
  height: 17px;
  border-radius: 50%;
  color: #fff;
  font: 700 8px/17px Roboto, sans-serif;
  text-align: center;
}

.bdg-dark {
  background: radial-gradient(circle, #d33 0 1.500px, #111 2px 5px, #a8d8f5 5.500px);
}

.bdg-pink {
  background-color: #e8407e;
}

.bdg-teal {
  background-color: #0097a7;
}

.bdg-red {
  background-color: #e84a2a;
}

.bdg-brick {
  background-color: #b83a12;
}

.bdg-alert {
  background-color: #e53935;
  right: -5px;
  bottom: -2px;
  font-size: 9px;
}

.tg-ic {
  position: relative;
  display: block;
  width: 24px;
  height: 26px;
  margin-right: 2px;
  background-color: #2ea5e0;
  border-radius: 50%;
}

.tg-ic svg {
  width: 24px;
  height: 24px;
}

.zoom-ic {
  width: 20px;
  height: 27px;
  background-color: #0b5cff;
  border-radius: 50%;
  color: #fff;
  font: 900 20px/27px Roboto, sans-serif;
  text-align: center;
}

.xl-x {
  fill: #fff;
  font: bold 9px Roboto, sans-serif;
}

.tray {
  display: flex;
  align-items: center;
  margin-left: auto;
  height: 40px;
  color: #fff;
}

.tray-ic {
  width: 16px;
  height: 16px;
  margin-right: 8px;
}

.tray-lang {
  margin-left: 1px;
  font: 11.5px "Noto Sans", sans-serif;
}

.tray-clock {
  width: 74px;
  margin-left: 2px;
  font: 11.3px/18px "Noto Sans", sans-serif;
  text-align: center;
}

.tray-note {
  position: relative;
  width: 24px;
  height: 24px;
  margin-left: 5px;
  margin-right: 13px;
}

.tray-note svg {
  width: 16px;
  height: 16px;
}

.note-count {
  position: absolute;
  right: -1px;
  bottom: 0;
  width: 16px;
  height: 16px;
  background-color: #333;
  border: 1px solid #888;
  border-radius: 50%;
  font: 700 10px/14px "Noto Sans", sans-serif;
  text-align: center;
}

.show-desk {
  width: 5px;
  height: 40px;
  border-left: 1px solid #555;
}
```
